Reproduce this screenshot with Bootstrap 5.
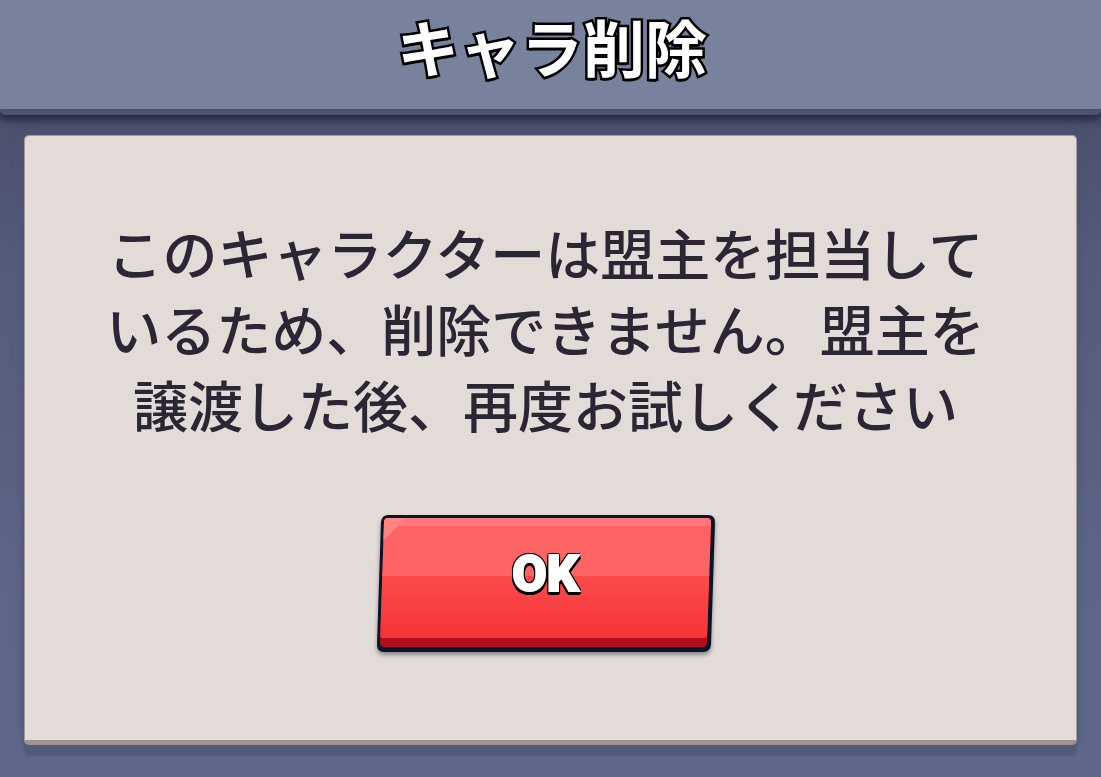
<!DOCTYPE html>
<html lang="ja">
<head>
<meta charset="utf-8">
<meta name="viewport" content="width=device-width, initial-scale=1">
<title>キャラ削除</title>
<link href="https://cdn.jsdelivr.net/npm/bootstrap@5.3.0/dist/css/bootstrap.min.css" rel="stylesheet">
<style>
  body {
    font-family: "Noto Sans CJK JP", sans-serif;
    background: linear-gradient(#4b506c 115px, #545b7b 260px, #5e678a 620px, #5f688b);
  }
  .dialog-head {
    background: #79829d;
    border-bottom: 6px solid #4b546d;
    border-radius: 0 0 5px 5px;
    box-shadow: 0 3px 8px 2px #26283f;
    padding: 4px 0 20px 3px;
  }
  .dialog-title {
    font-size: 62px;
    line-height: 85px;
    font-weight: 700;
    color: #fff;
    -webkit-text-stroke: 5px #000;
    paint-order: stroke fill;
    text-shadow: 0 3px 0 #000;
  }
  .panel {
    background: #e3dbd8;
    border: 1px solid #a19b9d;
    border-bottom: 5px solid #9d9491;
    border-radius: 5px;
    box-shadow: 0 11px 2px #535a79, 0 0 12px #4d5474;
    margin: 20px 24px 32px;
    padding: 77px 10px 86px 0;
  }
  .message {
    max-width: 16em;
    font-size: 55px;
    line-height: 76px;
    font-weight: 500;
    color: #2a2633;
  }
  .ok-button {
    width: 340px;
    height: 140px;
    margin-top: 73px;
    padding: 0 0 20px;
    background: none;
    border: 0;
  }
  .ok-art { z-index: 0; filter: drop-shadow(0 3px 2px #8d8786); }
  .ok-text {
    z-index: 1;
    font-family: Roboto, sans-serif;
    font-weight: 900;
    font-size: 50px;
    line-height: 60px;
    color: #fff;
    -webkit-text-stroke: 2px #fff;
    text-shadow: 2px 0 #000, -2px 0 #000, 0 -2px #000, 1px -2px #000, -1px -2px #000,
      2px -1px #000, -2px -1px #000, 2px 2px #000, -2px 2px #000, 0 2px #000,
      1px 4px #000, -1px 4px #000, 2px 3px #000, -2px 3px #000, 0 4px #000;
  }
</style>
</head>
<body>
<header class="dialog-head position-relative text-center">
  <h1 class="dialog-title m-0">キャラ削除</h1>
</header>
<main class="panel d-flex flex-column align-items-center">
  <p class="message text-center m-0">このキャラクターは盟主を担当しているため、削除できません。盟主を譲渡した後、再度お試しください</p>
  <button type="button" class="ok-button position-relative d-flex align-items-center justify-content-center">
    <svg class="ok-art position-absolute top-0 start-0 w-100 h-100" viewBox="0 0 340 140" aria-hidden="true">
      <defs>
        <linearGradient id="lower" x1="0" y1="0" x2="0" y2="1">
          <stop offset="0" stop-color="#fc4b4d"/>
          <stop offset="1" stop-color="#f53437"/>
        </linearGradient>
        <clipPath id="face"><path d="M12 4H331Q335 4 335 9L331 128Q331 133 327 133H8Q4 133 4 128L8 9Q8 4 12 4Z"/></clipPath>
      </defs>
      <path fill="#07162b" d="M12 1H332Q339 1 339 8L335 131Q334 138 327 138H8Q1 138 1 131L5 8Q6 1 12 1Z"/>
      <g clip-path="url(#face)">
        <path fill="#b00e1e" d="M0 0H340V140H0Z"/>
        <path fill="url(#lower)" d="M0 60H340L332 120Q331 124 328 124H7Q4 124 3 120Z"/>
        <path fill="#ff6464" d="M0 0H340V62H0Z"/>
        <path fill="#ff777a" d="M0 0H340V12H0Z"/>
        <path fill="#ff847f" d="M0 0H34L0 34Z"/>
      </g>
    </svg>
    <span class="ok-text position-relative">OK</span>
  </button>
</main>
<script src="https://cdn.jsdelivr.net/npm/bootstrap@5.3.0/dist/js/bootstrap.bundle.min.js"></script>
</body>
</html>
